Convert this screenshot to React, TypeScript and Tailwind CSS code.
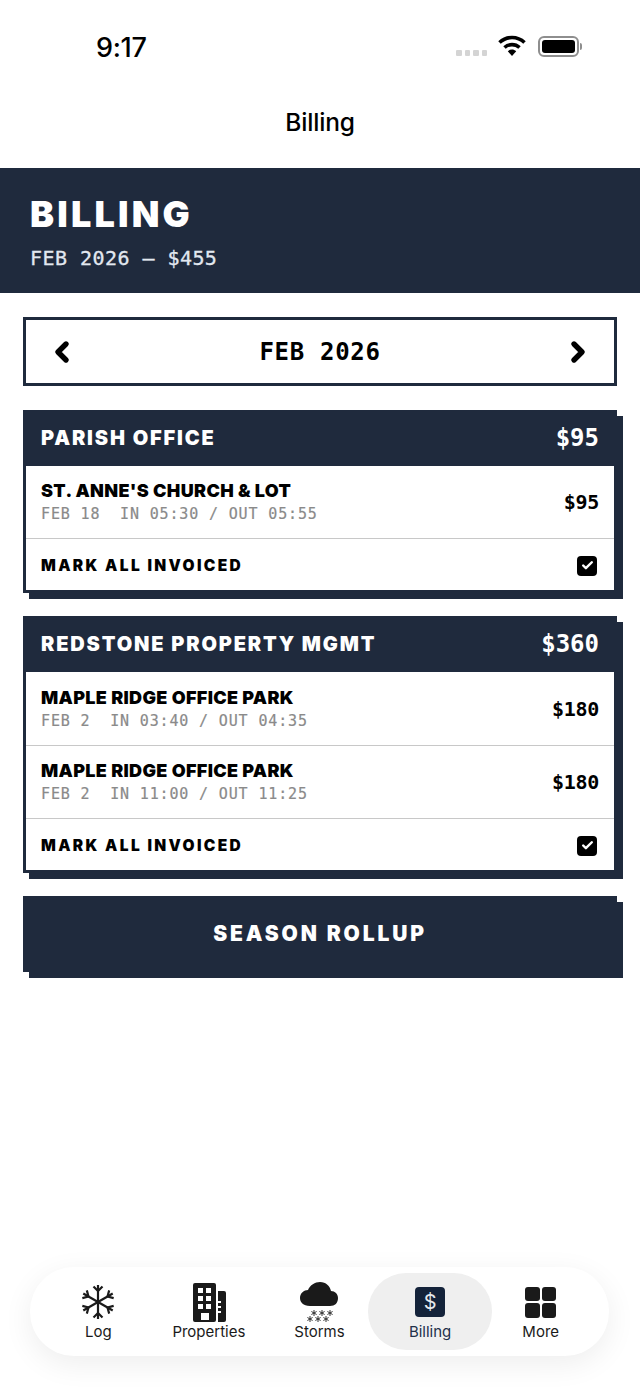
import { Check, ChevronLeft, ChevronRight } from 'lucide-react';

const MONO = "font-['DejaVu_Sans_Mono','Liberation_Mono',monospace]";
const HEAVY = "font-['Inter','Liberation_Sans',sans-serif] font-black";

type Entry = {
  readonly name: string;
  readonly detail: string;
  readonly amount: string;
};

const parishEntries: Entry[] = [
  { name: "ST. ANNE'S CHURCH & LOT", detail: 'FEB 18  IN 05:30 / OUT 05:55', amount: '$95' },
];

const redstoneEntries: Entry[] = [
  { name: 'MAPLE RIDGE OFFICE PARK', detail: 'FEB 2  IN 03:40 / OUT 04:35', amount: '$180' },
  { name: 'MAPLE RIDGE OFFICE PARK', detail: 'FEB 2  IN 11:00 / OUT 11:25', amount: '$180' },
];

function StatusBar() {
  return (
    <div className="h-[84px] pl-[96px] pr-[58px] pt-[33px] flex items-start justify-between">
      <span className="font-['Inter',sans-serif] text-[27px] leading-[30px] font-medium text-black tracking-[-0.3px]">
        9:17
      </span>
      <div className="flex items-center mt-[2px]">
        <div className="flex gap-[3px] mt-[14px] mr-[11px]">
          <span className="w-[5.5px] h-[6px] rounded-[1px] bg-[#d4d4d4]" />
          <span className="w-[5.5px] h-[6px] rounded-[1px] bg-[#d4d4d4]" />
          <span className="w-[5.5px] h-[6px] rounded-[1px] bg-[#d4d4d4]" />
          <span className="w-[5.5px] h-[6px] rounded-[1px] bg-[#d4d4d4]" />
        </div>
        <svg width="28" height="22" viewBox="0 0 28 22" className="mr-[12px]">
          <path d="M1.5 7.5C8.5 .8 19.5 .8 26.5 7.5" fill="none" stroke="#000" strokeWidth="3.6" />
          <path d="M6.5 12.5C10.8 8.6 17.2 8.6 21.5 12.5" fill="none" stroke="#000" strokeWidth="3.6" />
          <path d="M9.8 16.2C12.4 14 15.6 14 18.2 16.2L14 21Z" fill="#000" />
        </svg>
        <div className="w-[41px] h-[21px] rounded-[6px] border-2 border-[#8e8e8e] p-[2px]">
          <div className="w-full h-full rounded-[3px] bg-black" />
        </div>
        <span className="w-[2px] h-[7px] ml-[1px] rounded-r-[2px] bg-[#8e8e8e]" />
      </div>
    </div>
  );
}

function EntryRow({ entry }: { entry: Entry }) {
  return (
    <div className="h-[73.5px] pl-[15px] pr-[15px] flex items-center justify-between border-b border-[#c8c8c8]">
      <div>
        <div className={`${HEAVY} text-[18px] leading-[22px] text-black tracking-[0.34px]`}>{entry.name}</div>
        <div className={`${MONO} text-[15px] leading-[20px] mt-[2px] text-[#8a8a8a] whitespace-pre tracking-[0.85px] [-webkit-text-stroke:0.2px_#8a8a8a]`}>
          {entry.detail}
        </div>
      </div>
      <span className={`${MONO} text-[20px] font-bold text-black tracking-[-0.3px]`}>{entry.amount}</span>
    </div>
  );
}

type ClientCardProps = {
  readonly title: string;
  readonly total: string;
  readonly entries: Entry[];
};

function ClientCard({ title, total, entries }: ClientCardProps) {
  return (
    <div className="border-[3px] border-[#1f2a3d] bg-white shadow-[6px_6px_0_#1f2a3d]">
      <div className="h-[53px] bg-[#1f2a3d] pl-[15px] pr-[15px] pb-[3px] flex items-center justify-between">
        <span className={`${HEAVY} text-[20px] text-white tracking-[1.85px]`}>{title}</span>
        <span className={`${MONO} text-[24px] font-bold text-white`}>{total}</span>
      </div>
      {entries.map((e) => (
        <EntryRow key={e.detail} entry={e} />
      ))}
      <div className="h-[50.5px] pl-[15px] pr-[17px] flex items-center justify-between">
        <span className={`${HEAVY} text-[15.5px] text-black tracking-[2.35px] pt-[2px]`}>MARK ALL INVOICED</span>
        <span className="w-[20px] h-[20px] rounded-[4px] bg-black flex items-center justify-center mt-[2px]">
          <Check className="w-[13px] h-[13px] text-white" strokeWidth={4.5} />
        </span>
      </div>
    </div>
  );
}

function SnowflakeIcon() {
  const arms = [0, 60, 120, 180, 240, 300];
  return (
    <svg width="34" height="36" viewBox="0 0 34 36">
      <g fill="none" stroke="#1a1a1a" strokeWidth="2.2" transform="translate(17 18)">
        {arms.map((deg) => (
          <g key={deg} transform={`rotate(${deg})`}>
            <path d="M0 0V-17" />
            <path d="M-4.5 -15.5L0 -11L4.5 -15.5" />
          </g>
        ))}
      </g>
    </svg>
  );
}

function BuildingIcon() {
  return (
    <svg width="34" height="40" viewBox="0 0 34 40">
      <path
        fillRule="evenodd"
        fill="#1a1a1a"
        d="M3 1H22Q24 1 24 3V38Q24 40 22 40H3Q1 40 1 38V3Q1 1 3 1ZM6 6V11H11V6ZM14 6V11H19V6ZM6 14V19H11V14ZM14 14V19H19V14ZM6 22V27H11V22ZM14 22V27H19V22ZM9 31V38H17V31Z"
      />
      <path
        fill="#1a1a1a"
        d="M26 9H32Q34 9 34 11V38Q34 40 32 40H26V31H29V29H26V26H29V24H26V21H29V19H26Z"
      />
    </svg>
  );
}

function CloudSnowIcon() {
  const flakes = [
    [15, 31],
    [23, 31],
    [31, 31],
    [11, 37],
    [19, 37],
    [27, 37],
  ];
  return (
    <svg width="40" height="40" viewBox="0 0 40 40">
      <path
        fill="#1a1a1a"
        d="M11 24C4 24 1 20 1 16C1 11 5 8 9 8C11 3 16 0 21 0C27 0 31 4 32 9C36 9 39 12 39 16C39 21 36 24 31 24Z"
      />
      {flakes.map(([x, y]) => (
        <path
          key={`${x}-${y}`}
          d={`M${x} ${y - 3}V${y + 3}M${x - 2.6} ${y - 1.5}L${x + 2.6} ${y + 1.5}M${x - 2.6} ${y + 1.5}L${x + 2.6} ${y - 1.5}`}
          stroke="#333"
          strokeWidth="1"
        />
      ))}
    </svg>
  );
}

function TabBar() {
  const label = "font-['Inter',sans-serif] text-[15px] leading-[18px] font-normal mt-[1px]";
  return (
    <div className="ml-[30px] mr-[31px] mb-[31px] h-[89px] rounded-[44px] bg-white shadow-[0_8px_30px_rgba(0,0,0,0.07)] px-[13px] grid grid-cols-5 items-center">
      <div className="flex flex-col items-center">
        <div className="h-[40px] flex items-center">
          <SnowflakeIcon />
        </div>
        <span className={`${label} text-[#1a1a1a]`}>Log</span>
      </div>
      <div className="flex flex-col items-center">
        <BuildingIcon />
        <span className={`${label} text-[#1a1a1a]`}>Properties</span>
      </div>
      <div className="flex flex-col items-center">
        <CloudSnowIcon />
        <span className={`${label} text-[#1a1a1a]`}>Storms</span>
      </div>
      <div className="-mx-[7px] h-[77px] rounded-[38px] bg-[#efefef] flex flex-col items-center justify-center">
        <div className="h-[40px] flex items-center">
          <span className="w-[30px] h-[30px] rounded-[4px] bg-[#14233a] flex items-center justify-center font-['Inter',sans-serif] text-[20px] text-[#e6e9ee]">
            $
          </span>
        </div>
        <span className={`${label} text-[#22304a]`}>Billing</span>
      </div>
      <div className="flex flex-col items-center">
        <div className="h-[40px] flex items-center">
          <div className="grid grid-cols-2 gap-[2px]">
            <span className="w-[14.5px] h-[14.5px] rounded-[3px] bg-[#1a1a1a]" />
            <span className="w-[14.5px] h-[14.5px] rounded-[3px] bg-[#1a1a1a]" />
            <span className="w-[14.5px] h-[14.5px] rounded-[3px] bg-[#1a1a1a]" />
            <span className="w-[14.5px] h-[14.5px] rounded-[3px] bg-[#1a1a1a]" />
          </div>
        </div>
        <span className={`${label} text-[#1a1a1a]`}>More</span>
      </div>
    </div>
  );
}

export default function App() {
  return (
    <div className="w-[640px] h-[1387px] bg-white flex flex-col overflow-hidden">
      <StatusBar />
      <div className="h-[84px] pt-[22px] text-center font-['Inter',sans-serif] text-[24.5px] leading-[32px] font-medium text-black tracking-[-0.2px]">
        Billing
      </div>

      <header className="h-[125px] bg-[#1f2a3d] pl-[30px] pt-[26px]">
        <h1 className={`${HEAVY} text-[36px] leading-[40px] text-white tracking-[3.2px]`}>BILLING</h1>
        <p className={`${MONO} text-[20px] leading-[24px] mt-[12px] text-[#e2e8f0] tracking-[0.45px] [-webkit-text-stroke:0.3px_#e2e8f0]`}>
          FEB 2026 — $455
        </p>
      </header>

      <main className="px-[23px] pt-[24px] flex flex-col gap-[23.5px]">
        <div className="h-[69.25px] border-[3px] border-[#1f2a3d] flex items-center justify-between px-[20px]">
          <ChevronLeft className="w-[32px] h-[32px] text-black" strokeWidth={4} />
          <span className={`${MONO} text-[24px] font-bold text-black tracking-[0.7px]`}>FEB 2026</span>
          <ChevronRight className="w-[32px] h-[32px] text-black" strokeWidth={4} />
        </div>

        <ClientCard title="PARISH OFFICE" total="$95" entries={parishEntries} />
        <ClientCard title="REDSTONE PROPERTY MGMT" total="$360" entries={redstoneEntries} />

        <button className="h-[75.5px] bg-[#1f2a3d] shadow-[6px_6px_0_#1f2a3d] text-center">
          <span className={`${HEAVY} text-[21px] text-white tracking-[2.85px]`}>SEASON ROLLUP</span>
        </button>
      </main>

      <div className="mt-auto">
        <TabBar />
      </div>
    </div>
  );
}
